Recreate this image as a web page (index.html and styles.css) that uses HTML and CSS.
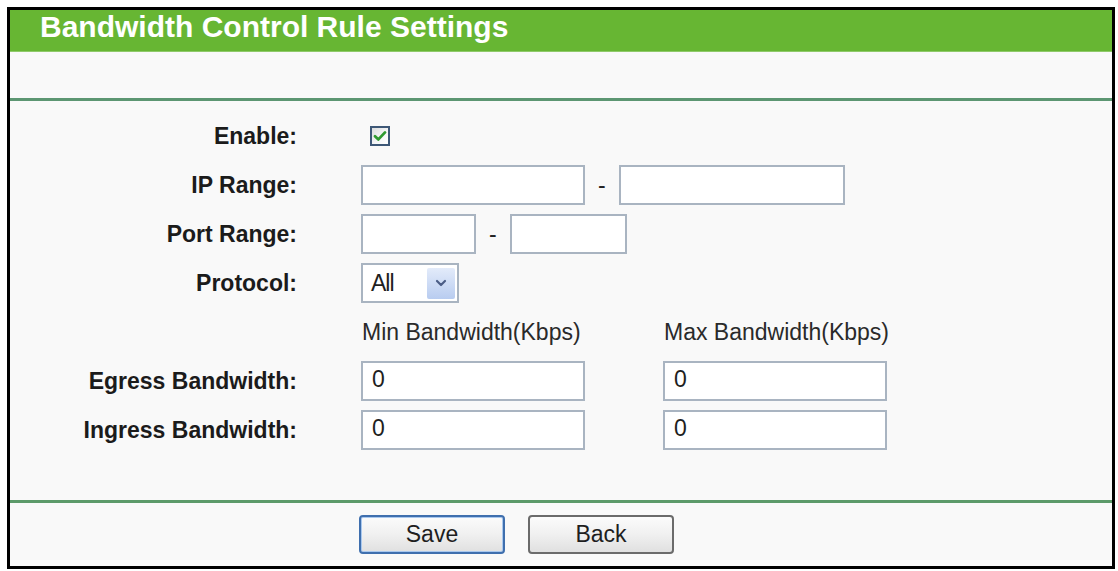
FILE: index.html
```html
<!DOCTYPE html>
<html>
<head>
<meta charset="utf-8">
<title>Bandwidth Control Rule Settings</title>
<link rel="stylesheet" href="styles.css">
</head>
<body>
<div class="panel">
  <div class="title">Bandwidth Control Rule Settings</div>
  <div class="spacer"></div>
  <div class="form">
    <div class="label">Enable:</div>
    <div class="field">
      <span class="checkbox">
        <svg width="14" height="12" viewBox="0 0 14 12"><path d="M2 6.2 L5.4 9.4 L12 2.4" fill="none" stroke="#2f9a30" stroke-width="2.8" stroke-linecap="round" stroke-linejoin="round"/></svg>
      </span>
    </div>

    <div class="label">IP Range:</div>
    <div class="field range">
      <span class="input w-ip1"></span>
      <span class="dash">-</span>
      <span class="input w-ip2"></span>
    </div>

    <div class="label">Port Range:</div>
    <div class="field range">
      <span class="input w-port1"></span>
      <span class="dash">-</span>
      <span class="input w-port2"></span>
    </div>

    <div class="label">Protocol:</div>
    <div class="field">
      <span class="select">
        <span class="select-text">All</span>
        <span class="select-btn">
          <svg width="12" height="8" viewBox="0 0 12 8"><path d="M2 2 L6 6 L10 2" fill="none" stroke="#4b5d86" stroke-width="2.2" stroke-linecap="round" stroke-linejoin="round"/></svg>
        </span>
      </span>
    </div>

    <div class="label"></div>
    <div class="field pair">
      <span class="col-head">Min Bandwidth(Kbps)</span>
      <span class="col-head">Max Bandwidth(Kbps)</span>
    </div>

    <div class="label">Egress Bandwidth:</div>
    <div class="field pair">
      <span class="input w-bw">0</span>
      <span class="input w-bw">0</span>
    </div>

    <div class="label">Ingress Bandwidth:</div>
    <div class="field pair">
      <span class="input w-bw">0</span>
      <span class="input w-bw">0</span>
    </div>
  </div>
  <div class="actions">
    <button class="btn btn-default">Save</button>
    <button class="btn">Back</button>
  </div>
</div>
</body>
</html>
```

FILE: styles.css
```css
html, body {
  margin: 0;
  padding: 0;
  background: #ffffff;
}

body {
  padding: 7px;
  font-family: "Liberation Sans", Arial, sans-serif;
}

.panel {
  box-sizing: border-box;
  width: 1108px;
  height: 562px;
  border: 3px solid #000;
  background: #f9f9f9;
  display: flex;
  flex-direction: column;
}

.title {
  height: 42px;
  box-sizing: border-box;
  background: #67b633;
  border-bottom: 1px solid #8fca6a;
  color: #fff;
  font-weight: bold;
  font-size: 30px;
  line-height: 34px;
  padding-left: 30px;
  white-space: nowrap;
}

.spacer {
  height: 46px;
  background: #f9f9f9;
}

.form {
  border-top: 3px solid #5c9672;
  box-shadow: 0 1px 0 #c4dccb;
  padding: 15px 0 50px 0;
  display: grid;
  grid-template-columns: 287px 1fr;
  grid-auto-rows: 40px;
  column-gap: 64px;
  row-gap: 9px;
}

.label {
  text-align: right;
  font-weight: bold;
  font-size: 23px;
  color: #1b1b1b;
  display: flex;
  align-items: center;
  justify-content: flex-end;
  white-space: nowrap;
}

.field {
  display: flex;
  align-items: center;
  font-size: 23px;
  color: #2a2a2a;
}

.checkbox {
  box-sizing: border-box;
  width: 20px;
  height: 20px;
  margin-left: 9px;
  border: 2px solid #3e5877;
  background: linear-gradient(135deg, #dcdedf 0%, #f6f7f8 60%, #ffffff 100%);
  display: flex;
  align-items: center;
  justify-content: center;
}

.range {
  gap: 13px;
}

.dash {
  font-size: 23px;
  color: #222;
  line-height: 1;
}

.input {
  box-sizing: border-box;
  height: 40px;
  border: 2px solid #a9b4c1;
  background: #fff;
  display: flex;
  align-items: center;
  padding-left: 9px;
  padding-bottom: 3px;
  font-size: 23px;
  color: #1e1e1e;
}

.w-ip1 { width: 224px; }
.w-ip2 { width: 226px; }
.w-port1 { width: 115px; }
.w-port2 { width: 117px; }
.w-bw { width: 224px; }

.pair {
  display: grid;
  grid-template-columns: 224px 224px;
  column-gap: 78px;
  align-items: center;
}

.col-head {
  white-space: nowrap;
  font-size: 23px;
  color: #2a2a2a;
  padding-left: 1px;
}

.select {
  box-sizing: border-box;
  width: 98px;
  height: 40px;
  border: 2px solid #a9b4c1;
  background: #fff;
  display: flex;
  align-items: center;
  justify-content: space-between;
  padding: 2px;
}

.select-text {
  padding-left: 6px;
  font-size: 23px;
  color: #1e1e1e;
  letter-spacing: -1px;
}

.select-btn {
  width: 28px;
  height: 31px;
  border-radius: 2px;
  background: linear-gradient(#e3ebfa, #b8ccf0);
  display: flex;
  align-items: center;
  justify-content: center;
}

.actions {
  border-top: 3px solid #5c9a6a;
  padding: 12px 0 0 349px;
  display: flex;
  gap: 23px;
  align-items: flex-start;
}

.btn {
  box-sizing: border-box;
  width: 146px;
  height: 39px;
  border: 2px solid #6b6b6b;
  border-radius: 4px;
  background: linear-gradient(#fbfbfb 0%, #f0f0f0 50%, #e0e0e0 100%);
  font-family: "Liberation Sans", Arial, sans-serif;
  font-size: 23px;
  color: #1e1e1e;
  padding: 0;
}

.btn-default {
  border-color: #3f6fae;
  box-shadow: inset 0 0 0 1px #a9c8ee;
}
```
